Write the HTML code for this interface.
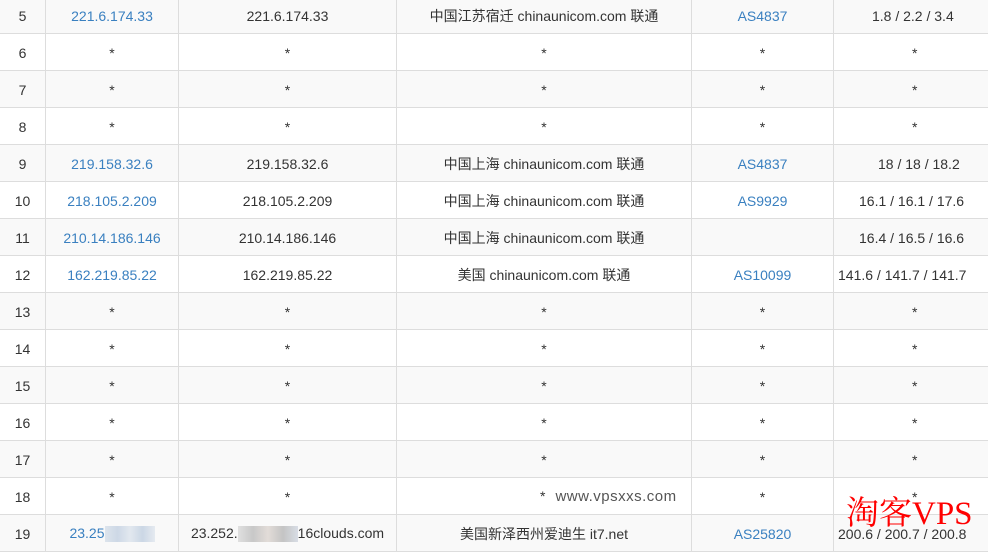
<!DOCTYPE html>
<html><head><meta charset="utf-8"><style>
body{margin:0;width:988px;height:548px;overflow:hidden;background:#fff;position:relative;font-family:"Liberation Sans","Noto Sans CJK SC",sans-serif;font-size:14px;color:#333}
table{position:absolute;left:-1px;top:-4px;border-collapse:collapse;table-layout:fixed;width:1010px}
td{border:1px solid #ddd;height:35px;padding:1px 0 0 0;text-align:center;white-space:nowrap;overflow:hidden}
tr:nth-child(odd) td{background:#f9f9f9}
a{color:#3a80c0;text-decoration:none}
.blur{display:inline-block;width:50px;height:16px;vertical-align:middle;background:linear-gradient(90deg,#dde4ec,#cdd8e6,#e2e8ef,#cbd7e5,#e5eaf0)}
.blur2{display:inline-block;width:60px;height:16px;vertical-align:middle;background:linear-gradient(90deg,#e0e0e0,#c8c8c8,#e2dcd8,#c4c4c4,#d8dde5)}
.wm{position:absolute;left:846px;top:494px;font-family:"Liberation Serif","Noto Serif CJK SC",serif;font-size:33px;color:#f00;line-height:40px}
.wm2{font-size:15px;color:#555;letter-spacing:.5px;margin-left:10px}
</style></head><body>
<table>
<colgroup><col style="width:46px"><col style="width:133px"><col style="width:218px"><col style="width:295px"><col style="width:142px"><col style="width:176px"></colgroup>
<tr><td>5</td><td><a>221.6.174.33</a></td><td>221.6.174.33</td><td>中国江苏宿迁 chinaunicom.com 联通</td><td><a>AS4837</a></td><td style="text-align:left;padding-left:38px">1.8 / 2.2 / 3.4</td></tr>
<tr><td>6</td><td>*</td><td>*</td><td>*</td><td>*</td><td style="text-align:left;padding-left:78px">*</td></tr>
<tr><td>7</td><td>*</td><td>*</td><td>*</td><td>*</td><td style="text-align:left;padding-left:78px">*</td></tr>
<tr><td>8</td><td>*</td><td>*</td><td>*</td><td>*</td><td style="text-align:left;padding-left:78px">*</td></tr>
<tr><td>9</td><td><a>219.158.32.6</a></td><td>219.158.32.6</td><td>中国上海 chinaunicom.com 联通</td><td><a>AS4837</a></td><td style="text-align:left;padding-left:44px">18 / 18 / 18.2</td></tr>
<tr><td>10</td><td><a>218.105.2.209</a></td><td>218.105.2.209</td><td>中国上海 chinaunicom.com 联通</td><td><a>AS9929</a></td><td style="text-align:left;padding-left:25px">16.1 / 16.1 / 17.6</td></tr>
<tr><td>11</td><td><a>210.14.186.146</a></td><td>210.14.186.146</td><td>中国上海 chinaunicom.com 联通</td><td></td><td style="text-align:left;padding-left:25px">16.4 / 16.5 / 16.6</td></tr>
<tr><td>12</td><td><a>162.219.85.22</a></td><td>162.219.85.22</td><td>美国 chinaunicom.com 联通</td><td><a>AS10099</a></td><td style="text-align:left;padding-left:4px">141.6 / 141.7 / 141.7</td></tr>
<tr><td>13</td><td>*</td><td>*</td><td>*</td><td>*</td><td style="text-align:left;padding-left:78px">*</td></tr>
<tr><td>14</td><td>*</td><td>*</td><td>*</td><td>*</td><td style="text-align:left;padding-left:78px">*</td></tr>
<tr><td>15</td><td>*</td><td>*</td><td>*</td><td>*</td><td style="text-align:left;padding-left:78px">*</td></tr>
<tr><td>16</td><td>*</td><td>*</td><td>*</td><td>*</td><td style="text-align:left;padding-left:78px">*</td></tr>
<tr><td>17</td><td>*</td><td>*</td><td>*</td><td>*</td><td style="text-align:left;padding-left:78px">*</td></tr>
<tr><td>18</td><td>*</td><td>*</td><td style="text-align:left;padding-left:143px">*<span class="wm2">www.vpsxxs.com</span></td><td>*</td><td style="text-align:left;padding-left:78px">*</td></tr>
<tr><td>19</td><td><a>23.25</a><span class="blur"></span></td><td>23.252.<span class="blur2"></span>16clouds.com</td><td>美国新泽西州爱迪生 it7.net</td><td><a>AS25820</a></td><td style="text-align:left;padding-left:4px">200.6 / 200.7 / 200.8</td></tr>
</table>
<div class="wm">淘客VPS</div>
</body></html>
